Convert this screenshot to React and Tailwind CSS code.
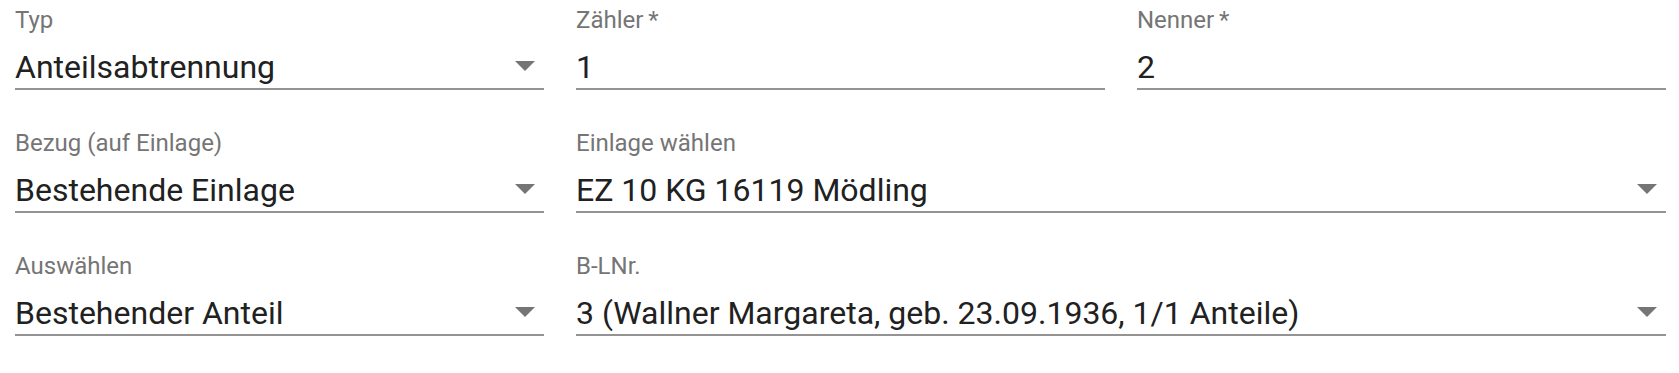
const fields = [
  { label: 'Typ', value: 'Anteilsabtrennung', select: true },
  { label: 'Zähler\u2009*', value: '1' },
  { label: 'Nenner\u2009*', value: '2' },
  { label: 'Bezug (auf Einlage)', value: 'Bestehende Einlage', select: true },
  { label: 'Einlage wählen', value: 'EZ 10 KG 16119 Mödling', select: true, wide: true },
  { label: 'Auswählen', value: 'Bestehender Anteil', select: true },
  { label: 'B-LNr.', value: '3 (Wallner Margareta, geb. 23.09.1936, 1/1 Anteile)', select: true, wide: true },
];

function ArrowDrop() {
  return (
    <svg viewBox="0 0 20 10" className="w-[20px] h-[10px] fill-[#757575]">
      <path d="M0 0l10 10 10-10z" />
    </svg>
  );
}

function Field({ label, value, select, wide }) {
  return (
    <div className={`flex flex-col ${wide ? 'col-span-2' : ''}`}>
      <label className="text-[24px] leading-[28px] text-[#757575] mt-[6px]">{label}</label>
      <div className="flex items-start mt-[14px] pb-[2px] border-b-2 border-[#949494]">
        <span className="flex-1 text-[32px] leading-[38px] text-[#212121] whitespace-nowrap">{value}</span>
        {select && (
          <span className="mt-[13px] mr-[9px]">
            <ArrowDrop />
          </span>
        )}
      </div>
    </div>
  );
}

export default function App() {
  return (
    <div className="w-[1679px] h-[373px] bg-white pl-[15px] pr-[13px] font-['Roboto',sans-serif]">
      <div className="grid grid-cols-3 gap-x-[32px] gap-y-[33px]">
        {fields.map((f) => (
          <Field key={f.label} {...f} />
        ))}
      </div>
    </div>
  );
}
